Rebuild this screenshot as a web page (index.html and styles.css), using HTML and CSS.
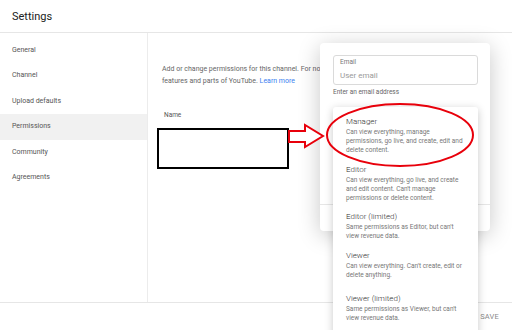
FILE: index.html
```html
<!DOCTYPE html>
<html lang="en">
<head>
    <meta charset="UTF-8">
    <title>Settings</title>
    <link rel="stylesheet" href="styles.css">
</head>
<body>
    <div class="page">
        <div class="header">Settings</div>
        <div class="content">
            <nav class="sidebar">
                <div class="nav-item">General</div>
                <div class="nav-item">Channel</div>
                <div class="nav-item">Upload defaults</div>
                <div class="nav-item active">Permissions</div>
                <div class="nav-item">Community</div>
                <div class="nav-item">Agreements</div>
            </nav>
            <main class="main">
                <p class="intro">Add or change permissions for this channel. For now,<br>features and parts of YouTube. <a href="#" class="link">Learn more</a></p>
                <div class="col-name">Name</div>
                <div class="redacted"></div>
            </main>
        </div>
        <div class="footer"><span class="save">SAVE</span></div>
    </div>

    <div class="dialog">
        <div class="dialog-body">
            <div class="field">
                <div class="field-label">Email</div>
                <div class="field-input">User email</div>
            </div>
            <div class="helper">Enter an email address</div>
        </div>
        <div class="dialog-footer"></div>
    </div>

    <div class="menu">
        <div class="menu-item">
            <div class="role">Manager</div>
            <div class="role-desc">Can view everything, manage<br>permissions, go live, and create, edit and<br>delete content.</div>
        </div>
        <div class="menu-item">
            <div class="role">Editor</div>
            <div class="role-desc">Can view everything, go live, and create<br>and edit content. Can't manage<br>permissions or delete content.</div>
        </div>
        <div class="menu-item">
            <div class="role">Editor (limited)</div>
            <div class="role-desc">Same permissions as Editor, but can't<br>view revenue data.</div>
        </div>
        <div class="menu-item menu-item-wide">
            <div class="role">Viewer</div>
            <div class="role-desc">Can view everything. Can't create, edit or<br>delete anything.</div>
        </div>
        <div class="menu-item">
            <div class="role">Viewer (limited)</div>
            <div class="role-desc">Same permissions as Viewer, but can't<br>view revenue data.</div>
        </div>
    </div>

    <svg class="marks" width="512" height="330" viewBox="0 0 512 330">
        <polygon points="289,131 305,131 305,125 323,136 305,147 305,142 289,142" fill="#fff" stroke="#e8000b" stroke-width="2" stroke-linejoin="miter"/>
        <ellipse cx="400" cy="135" rx="73" ry="31" fill="none" stroke="#e8000b" stroke-width="2"/>
    </svg>
</body>
</html>
```

FILE: styles.css
```css
body {
    margin: 0;
    font-family: Roboto, "Liberation Sans", sans-serif;
    color: #282828;
    background-color: #fff;
    overflow: hidden;
}
.page {
    width: 512px;
    height: 330px;
    display: flex;
    flex-direction: column;
}
.header {
    height: 33px;
    border-bottom: 1px solid #e6e6e6;
    padding-left: 12px;
    font-size: 11px;
    display: flex;
    align-items: center;
    color: #212121;
    box-sizing: border-box;
    padding-top: 1px;
}
.content {
    display: flex;
    height: 269px;
}
.sidebar {
    width: 148px;
    border-right: 1px solid #ececec;
    padding-top: 5px;
    box-sizing: border-box;
}
.nav-item {
    height: 25.4px;
    line-height: 25.4px;
    padding-left: 12px;
    font-size: 7px;
    color: #555;
}
.nav-item.active {
    background-color: #f1f1f1;
}
.main {
    flex: 1;
    padding: 30px 0 0 14px;
}
.intro {
    margin: 0;
    font-size: 7px;
    line-height: 12px;
    color: #666;
    white-space: nowrap;
}
.link {
    color: #3a7ff0;
    text-decoration: none;
}
.col-name {
    margin: 23px 0 0 2px;
    font-size: 6.5px;
    line-height: 10px;
    color: #555;
}
.redacted {
    margin: 8px 0 0 -5px;
    width: 128px;
    height: 37px;
    border: 2px solid #000;
}
.footer {
    flex: 1;
    border-top: 1px solid #e6e6e6;
    display: flex;
    align-items: center;
    justify-content: flex-end;
    padding-right: 13px;
}
.save {
    font-size: 7.5px;
    color: #8a8a8a;
    letter-spacing: 0.2px;
}
.dialog {
    position: absolute;
    left: 320px;
    top: 43px;
    width: 170px;
    height: 188px;
    background-color: #fff;
    border-radius: 4px;
    box-shadow: 0 4px 22px rgba(0, 0, 0, 0.22);
    display: flex;
    flex-direction: column;
}
.dialog-body {
    flex: 1;
    padding: 12px 12px 0 13px;
}
.field {
    width: 145px;
    height: 30px;
    box-sizing: border-box;
    border: 1px solid #dadada;
    border-radius: 3px;
    padding: 2px 0 0 6px;
}
.field-label {
    font-size: 6.5px;
    line-height: 8px;
    color: #777;
}
.field-input {
    margin-top: 5px;
    font-size: 8px;
    line-height: 10px;
    color: #9a9a9a;
}
.helper {
    margin-top: 2px;
    font-size: 6.5px;
    line-height: 10px;
    color: #666;
}
.dialog-footer {
    height: 26px;
    border-top: 1px solid #e6e6e6;
}
.menu {
    position: absolute;
    left: 333px;
    top: 107px;
    width: 145px;
    height: 232px;
    background-color: #fff;
    border-radius: 3px;
    box-shadow: 0 2px 8px rgba(0, 0, 0, 0.22);
    padding-top: 9px;
    box-sizing: border-box;
}
.menu-item {
    padding: 0 13px 8.5px 13px;
}
.menu-item-wide {
    padding-bottom: 13.5px;
}
.role {
    font-size: 8px;
    line-height: 12px;
    font-weight: 300;
    color: #333;
}
.role-desc {
    font-size: 6.5px;
    line-height: 9px;
    color: #777;
    white-space: nowrap;
}
.marks {
    position: absolute;
    left: 0;
    top: 0;
    pointer-events: none;
}
```
